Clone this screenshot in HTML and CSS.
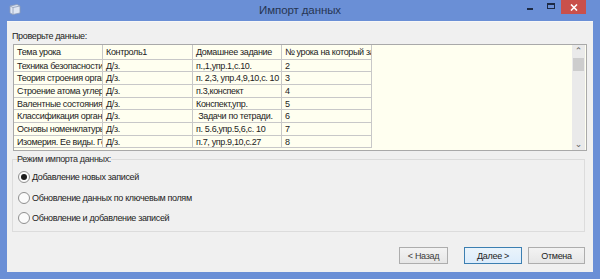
FILE: index.html
```html
<!DOCTYPE html>
<html lang="ru">
<head>
<meta charset="utf-8">
<title>Импорт данных</title>
<link rel="stylesheet" href="styles.css">
</head>
<body>
<div class="window">
  <div class="titlebar">
    <svg class="app-icon" width="12" height="11" viewBox="0 0 12 11">
      <path d="M1 2 L8 0.5 L11 2 L11 9 L4 10.5 L1 9 Z" fill="#dfe6f3" stroke="#8d9cb8" stroke-width="0.8"/>
      <path d="M1 2 L4 3.5 L11 2" fill="none" stroke="#8d9cb8" stroke-width="0.8"/>
      <path d="M4 3.5 L4 10.5" stroke="#8d9cb8" stroke-width="0.8"/>
    </svg>
    <div class="title">Импорт данных</div>
    <div class="controls">
      <span class="ctl min"><i></i></span>
      <span class="ctl max"><i></i></span>
      <span class="ctl close">
        <svg width="8" height="7" viewBox="0 0 8 7"><path d="M1 0.5 L7 6.5 M7 0.5 L1 6.5" stroke="#fff" stroke-width="1.6"/></svg>
      </span>
    </div>
  </div>
  <div class="client">
    <div class="caption">Проверьте данные:</div>
    <div class="grid-box">
      <div class="grid">
        <div class="row head">
          <div class="cell c1">Тема урока</div>
          <div class="cell c2">Контроль1</div>
          <div class="cell c3">Домашнее задание</div>
          <div class="cell c4">№ урока на который задано</div>
        </div>
        <div class="row">
          <div class="cell c1">Техника безопасности</div>
          <div class="cell c2">Д/з.</div>
          <div class="cell c3">п.,1,упр.1,с.10.</div>
          <div class="cell c4">2</div>
        </div>
        <div class="row">
          <div class="cell c1">Теория строения органических</div>
          <div class="cell c2">Д/з.</div>
          <div class="cell c3">п. 2,3, упр.4,9,10,с. 10</div>
          <div class="cell c4">3</div>
        </div>
        <div class="row">
          <div class="cell c1">Строение атома углерода</div>
          <div class="cell c2">Д/з.</div>
          <div class="cell c3">п.3,конспект</div>
          <div class="cell c4">4</div>
        </div>
        <div class="row">
          <div class="cell c1">Валентные состояния атома</div>
          <div class="cell c2">Д/з.</div>
          <div class="cell c3">Конспект,упр.</div>
          <div class="cell c4">5</div>
        </div>
        <div class="row">
          <div class="cell c1">Классификация органических</div>
          <div class="cell c2">Д/з.</div>
          <div class="cell c3">&nbsp;Задачи по тетради.</div>
          <div class="cell c4">6</div>
        </div>
        <div class="row">
          <div class="cell c1">Основы номенклатуры</div>
          <div class="cell c2">Д/з.</div>
          <div class="cell c3">п. 5.6,упр.5,6,с. 10</div>
          <div class="cell c4">7</div>
        </div>
        <div class="row">
          <div class="cell c1">Изомерия. Ее виды. Гомологи</div>
          <div class="cell c2">Д/з.</div>
          <div class="cell c3">п.7, упр.9,10,с.27</div>
          <div class="cell c4">8</div>
        </div>
      </div>
      <div class="vscroll">
        <span class="arrow">&#8963;</span>
        <span class="thumb"></span>
        <span class="track"></span>
        <span class="arrow">&#8964;</span>
      </div>
    </div>
    <fieldset class="group">
      <legend>Режим импорта данных:</legend>
      <label class="radio"><span class="dot checked"></span>Добавление новых записей</label>
      <label class="radio"><span class="dot"></span>Обновление данных по ключевым полям</label>
      <label class="radio"><span class="dot"></span>Обновление и добавление записей</label>
    </fieldset>
    <div class="buttons">
      <button class="btn back">&lt; Назад</button>
      <button class="btn next">Далее &gt;</button>
      <button class="btn cancel">Отмена</button>
    </div>
  </div>
</div>
</body>
</html>
```

FILE: styles.css
```css
* { box-sizing: border-box; }
html, body {
  margin: 0;
  padding: 0;
  width: 600px;
  height: 279px;
  overflow: hidden;
}
body {
  font-family: "Liberation Sans", Arial, sans-serif;
  font-size: 9px;
  letter-spacing: -0.35px;
  color: #222;
  background: #6a8fd6;
}
.window {
  width: 600px;
  height: 279px;
  display: flex;
  flex-direction: column;
  background: #6a8fd6;
}
.titlebar {
  height: 21px;
  display: flex;
  align-items: flex-start;
  position: relative;
  flex: none;
}
.app-icon {
  margin: 4px 0 0 9px;
}
.title {
  position: absolute;
  left: 0;
  right: 0;
  top: 4px;
  text-align: center;
  font-size: 11.5px;
  letter-spacing: -0.1px;
  color: #263553;
  pointer-events: none;
}
.controls {
  margin-left: auto;
  margin-right: 14px;
  display: flex;
  align-items: flex-start;
}
.ctl {
  display: flex;
  align-items: center;
  justify-content: center;
  height: 14px;
}
.ctl.min { width: 20px; }
.ctl.min i {
  display: block;
  width: 6px;
  height: 2px;
  background: #1d2a44;
  margin-top: 4px;
}
.ctl.max { width: 21px; }
.ctl.max i {
  display: block;
  width: 8px;
  height: 6px;
  border: 1px solid #1d2a44;
  border-top-width: 2px;
  margin-top: -2px;
}
.ctl.close {
  width: 25px;
  background: #c9504b;
}
.client {
  flex: 1;
  margin: 0 7px 7px 7px;
  background: #f0f0f0;
  padding: 8px 0 0 5px;
  display: flex;
  flex-direction: column;
  border-top: 1px solid #f7f7f7;
}
.caption {
  height: 14px;
  line-height: 12px;
}
.grid-box {
  margin-left: 1px;
  width: 574px;
  height: 107px;
  border: 1px solid #a9a9a9;
  background: #fffff0;
  display: flex;
  overflow: hidden;
}
.grid {
  flex: 1;
  overflow: hidden;
}
.row {
  display: flex;
  height: 12.7px;
  width: 358px;
  border-bottom: 1px solid #c8c8c8;
}
.row.head { height: 14.5px; }
.cell {
  white-space: nowrap;
  overflow: hidden;
  border-right: 1px solid #c8c8c8;
  padding-left: 3px;
  line-height: 12px;
}
.row.head .cell { line-height: 14px; }
.c1 { width: 89px; }
.c2 { width: 90px; }
.c3 { width: 89px; }
.c4 { width: 90px; }
.vscroll {
  width: 13px;
  margin-right: 1px;
  background: #eaeaea;
  display: flex;
  flex-direction: column;
  align-items: center;
}
.arrow {
  height: 12px;
  line-height: 12px;
  font-size: 9px;
  letter-spacing: 0;
  color: #606060;
  font-family: "DejaVu Sans", sans-serif;
}
.thumb {
  width: 11px;
  height: 13px;
  background: #cdcdcd;
  margin-top: 1px;
}
.track { flex: 1; }
.group {
  margin: 3px 0 0 0;
  width: 573px;
  height: 78px;
  border: 1px solid #dcdcdc;
  padding: 3px 0 0 5px;
  display: flex;
  flex-direction: column;
}
.group legend {
  padding: 0;
  margin-left: -1px;
  color: #2a2a2a;
}
.radio {
  display: flex;
  align-items: center;
  height: 20.5px;
  color: #222;
}
.dot {
  width: 12px;
  height: 12px;
  border-radius: 50%;
  border: 1px solid #8f8f8f;
  background: #fbfbfb;
  margin-right: 2px;
  display: flex;
  align-items: center;
  justify-content: center;
}
.dot.checked::after {
  content: "";
  width: 6px;
  height: 6px;
  border-radius: 50%;
  background: #1b1b1b;
}
.buttons {
  margin-top: auto;
  margin-bottom: 8px;
  display: flex;
  justify-content: flex-end;
  padding-right: 8px;
}
.btn {
  font-family: "Liberation Sans", Arial, sans-serif;
  font-size: 9px;
  letter-spacing: -0.3px;
  color: #222;
  height: 17px;
  border: 1px solid #adadad;
  background: linear-gradient(#f3f3f3, #e6e6e6);
  padding: 0;
  border-radius: 0;
}
.btn.back { width: 49px; margin-right: 16px; color: #3a3a3a; }
.btn.next {
  width: 58px;
  margin-right: 6px;
  border-color: #3c7fb1;
  background: linear-gradient(#eaf4fb, #dcecfc);
}
.btn.cancel { width: 57px; }
```
